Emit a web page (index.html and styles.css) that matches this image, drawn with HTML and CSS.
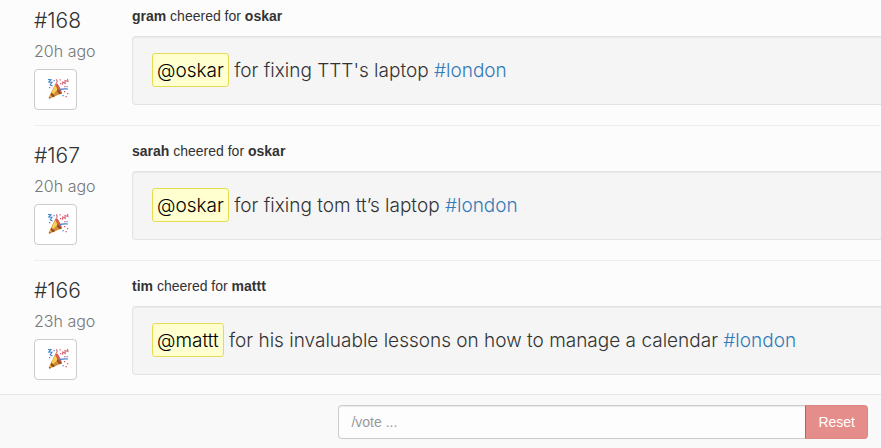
FILE: index.html
```html
<!DOCTYPE html>
<html lang="en">
<head>
<meta charset="utf-8">
<title>Cheers</title>
<link rel="stylesheet" href="styles.css">
</head>
<body>
<svg class="sprite" aria-hidden="true">
  <symbol id="popper" viewBox="0 0 22 22">
    <path fill="#d58a35" d="M8.300 6 15 15.300 2.700 20.500 1.700 19.500Z"/>
    <path fill="#f6cf55" d="M8.100 7 10.500 12 2.500 19.500Z"/>
    <path fill="#8d4a25" d="M4.500 14.500 8 18.300 6 19.200 3.600 17ZM10.500 11 15 15.300 12.800 16.200 9.800 13ZM1.700 19.200 4 19.900 2.500 20.800Z"/>
    <path fill="#d95a50" d="M8 6Q10 3.500 12.300 8.500 15 13 14.800 15.300L11.500 12.300Z"/>
    <path fill="none" stroke="#3c80cd" stroke-width="1.100" d="M1 1.500 4 1.700 1.800 4 5 4.300 3.200 6.800 5.500 8M12 12.200Q15 10.500 21 11"/>
    <path fill="none" stroke="#d96075" stroke-width="1.100" d="M15.500 6.800 15.800 4 18.200 5.500 18 2.500 21 3.500 20.500 .8M9 1.500Q11 2.500 9.500 5"/>
    <path fill="#e0566b" d="M2 9h1.300v1.300H2zM13 5h1.300v1.300H13zM17 13h1.300v1.300H17zM20 15h1.300v1.300H20zM18.500 18h1.300v1.300h-1.300zM12.500 1.200h1.200v1.200h-1.200zM17.200 8h1.300v1.300h-1.300z"/>
    <path fill="#4b91d6" d="M15.500 17h1.300v1.300h-1.300zM19.500 8h1.200v1.200h-1.200zM6.500 2h1.200v1.200H6.500z"/>
  </symbol>
</svg>
<main class="feed">
  <article class="entry">
    <div class="meta">
      <div class="number">#168</div>
      <div class="age">20h ago</div>
      <button class="cheer" type="button" aria-label="Cheer"><svg><use href="#popper"/></svg></button>
    </div>
    <div class="content">
      <p class="summary"><b>gram</b> cheered for <b>oskar</b></p>
      <p class="well"><span class="mention">@oskar</span> for fixing TTT's laptop <a href="#london">#london</a></p>
    </div>
  </article>
  <article class="entry">
    <div class="meta">
      <div class="number">#167</div>
      <div class="age">20h ago</div>
      <button class="cheer" type="button" aria-label="Cheer"><svg><use href="#popper"/></svg></button>
    </div>
    <div class="content">
      <p class="summary"><b>sarah</b> cheered for <b>oskar</b></p>
      <p class="well"><span class="mention">@oskar</span> for fixing tom tt’s laptop <a href="#london">#london</a></p>
    </div>
  </article>
  <article class="entry">
    <div class="meta">
      <div class="number">#166</div>
      <div class="age">23h ago</div>
      <button class="cheer" type="button" aria-label="Cheer"><svg><use href="#popper"/></svg></button>
    </div>
    <div class="content">
      <p class="summary"><b>tim</b> cheered for <b>mattt</b></p>
      <p class="well"><span class="mention">@mattt</span> for his invaluable lessons on how to manage a calendar <a href="#london">#london</a></p>
    </div>
  </article>
</main>
<form class="bar">
  <input type="text" placeholder="/vote ..." aria-label="Command">
  <button type="reset">Reset</button>
</form>
</body>
</html>
```
FILE: styles.css
```css
* { box-sizing: border-box; }

body {
  display: flex;
  flex-direction: column;
  height: 100vh;
  margin: 0;
  background: #fcfcfc;
  color: #333;
  font: 14px/18px "Liberation Sans", Arial, sans-serif;
}

.sprite { display: none; }

.feed {
  flex: 1;
  min-height: 0;
  overflow: hidden;
  padding-left: 34px;
}

.entry {
  display: flex;
  padding: 7px 0 15px;
}

.entry + .entry {
  border-top: 1px solid #eee;
  padding-top: 16px;
}

.meta {
  flex: 0 0 98px;
  padding-top: 2px;
  font-family: Inter, sans-serif;
  font-weight: 300;
}

.number {
  font-size: 21px;
  line-height: 24px;
}

.age {
  margin: 8px 0;
  color: #777;
  font-size: 16px;
  line-height: 20px;
}

.cheer {
  display: flex;
  align-items: center;
  justify-content: center;
  width: 43px;
  height: 41px;
  padding: 0 0 2px 4px;
  border: 1px solid #ccc;
  border-radius: 4px;
  background: #fff;
}

.cheer svg {
  width: 22px;
  height: 22px;
}

.content {
  flex: 1;
  min-width: 0;
}

.summary { margin: 0 0 11px; }

.well {
  margin: 0;
  padding: 16px 19px 15px;
  border: 1px solid #e3e3e3;
  border-right: 0;
  border-radius: 4px 0 0 4px;
  background: #f5f5f5;
  box-shadow: inset 0 1px 1px rgba(0, 0, 0, 0.05);
  font: 300 19px/36px Inter, sans-serif;
}

.well a {
  color: #337ab7;
  text-decoration: none;
}

.mention {
  display: inline-block;
  height: 34px;
  padding: 0 4px;
  border: 1px solid #e6db55;
  border-radius: 3px;
  background: #ffffcf;
  color: #000;
  line-height: 34px;
  vertical-align: top;
}

.bar {
  display: flex;
  justify-content: flex-end;
  margin: 0;
  padding: 10px 13px 9px;
  border-top: 1px solid #e5e5e5;
  background: #f9f9f9;
}

.bar input {
  flex: 0 1 467px;
  min-width: 0;
  height: 34px;
  padding: 6px 12px;
  border: 1px solid #ccc;
  border-right: 0;
  border-radius: 4px 0 0 4px;
  background: #fdfdfd;
  font: inherit;
  box-shadow: inset 0 1px 1px rgba(0, 0, 0, 0.07);
}

.bar input::placeholder { color: #999; }

.bar button {
  padding: 0 12px;
  border: 1px solid #df8582;
  border-left-color: #d9534f;
  border-radius: 0 4px 4px 0;
  background: #e58d8b;
  color: #fff;
  font: inherit;
}
```
